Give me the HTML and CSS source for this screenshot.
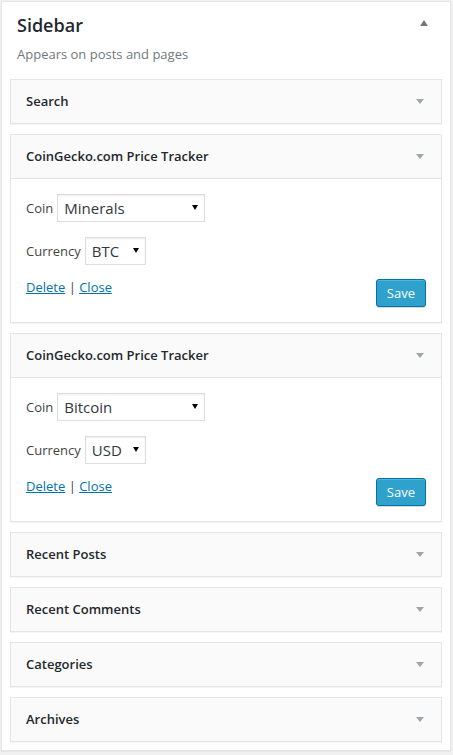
FILE: index.html
```html
<!DOCTYPE html>
<html lang="en">
<head>
<meta charset="utf-8">
<title>Sidebar widgets</title>
<link rel="stylesheet" href="styles.css">
</head>
<body>
<div class="sidebar">
  <div class="sidebar-name">
    <h2>Sidebar</h2>
    <svg class="toggle-up" width="8" height="6" viewBox="0 0 8 6"><path d="M4 0 L8 6 L0 6 Z"/></svg>
  </div>
  <p class="sidebar-desc">Appears on posts and pages</p>
  <div class="widgets">
    <div class="widget">
      <div class="widget-top"><h3>Search</h3><svg class="toggle" width="8" height="5" viewBox="0 0 8 5"><path d="M0 0 L8 0 L4 5 Z"/></svg></div>
    </div>

    <div class="widget">
      <div class="widget-top"><h3>CoinGecko.com Price Tracker</h3><svg class="toggle" width="8" height="5" viewBox="0 0 8 5"><path d="M0 0 L8 0 L4 5 Z"/></svg></div>
      <div class="widget-inside">
        <div class="field"><label>Coin</label><span class="select-wrap coin"><select><option>Minerals</option></select></span></div>
        <div class="field"><label>Currency</label><span class="select-wrap currency"><select><option>BTC</option></select></span></div>
        <div class="actions">
          <div class="links"><a href="#">Delete</a> | <a href="#">Close</a></div>
          <button class="save">Save</button>
        </div>
      </div>
    </div>

    <div class="widget">
      <div class="widget-top"><h3>CoinGecko.com Price Tracker</h3><svg class="toggle" width="8" height="5" viewBox="0 0 8 5"><path d="M0 0 L8 0 L4 5 Z"/></svg></div>
      <div class="widget-inside">
        <div class="field"><label>Coin</label><span class="select-wrap coin"><select><option>Bitcoin</option></select></span></div>
        <div class="field"><label>Currency</label><span class="select-wrap currency"><select><option>USD</option></select></span></div>
        <div class="actions">
          <div class="links"><a href="#">Delete</a> | <a href="#">Close</a></div>
          <button class="save">Save</button>
        </div>
      </div>
    </div>

    <div class="widget">
      <div class="widget-top"><h3>Recent Posts</h3><svg class="toggle" width="8" height="5" viewBox="0 0 8 5"><path d="M0 0 L8 0 L4 5 Z"/></svg></div>
    </div>
    <div class="widget">
      <div class="widget-top"><h3>Recent Comments</h3><svg class="toggle" width="8" height="5" viewBox="0 0 8 5"><path d="M0 0 L8 0 L4 5 Z"/></svg></div>
    </div>
    <div class="widget">
      <div class="widget-top"><h3>Categories</h3><svg class="toggle" width="8" height="5" viewBox="0 0 8 5"><path d="M0 0 L8 0 L4 5 Z"/></svg></div>
    </div>
    <div class="widget">
      <div class="widget-top"><h3>Archives</h3><svg class="toggle" width="8" height="5" viewBox="0 0 8 5"><path d="M0 0 L8 0 L4 5 Z"/></svg></div>
    </div>
  </div>
</div>
</body>
</html>
```
FILE: styles.css
```css
* { box-sizing: border-box; }
html, body { margin: 0; padding: 0; }
body {
  background: #f1f1f1;
  font-family: "Open Sans", "Noto Sans", sans-serif;
  font-size: 13px;
  color: #444;
  padding: 1px 2px 4px 1px;
}
.sidebar {
  background: #fff;
  border: 1px solid #e5e5e5;
  box-shadow: 0 1px 1px rgba(0,0,0,.04);
  width: 450px;
}
.sidebar-name {
  display: flex;
  align-items: center;
  justify-content: space-between;
  padding: 11px 22px 0 15px;
}
.sidebar-name h2 {
  margin: 0;
  font-size: 18px;
  line-height: 24px;
  font-weight: 600;
  color: #23282d;
}
.toggle-up { fill: #72777c; margin-top: -4px; }
.sidebar-desc {
  margin: 8px 0 0;
  padding: 0 15px;
  font-size: 13px;
  line-height: 18px;
  color: #72777c;
}
.widgets {
  display: flex;
  flex-direction: column;
  gap: 10px;
  padding: 16px 8px 8px;
}
.widget {
  border: 1px solid #e5e5e5;
  background: #fff;
  box-shadow: 0 1px 1px rgba(0,0,0,.04);
}
.widget-top {
  display: flex;
  align-items: center;
  background: #fafafa;
  padding-right: 17px;
}
.widget-top h3 {
  flex: 1;
  margin: 0;
  padding: 15px;
  font-size: 13px;
  line-height: 13px;
  font-weight: 600;
  color: #23282d;
}
.toggle { fill: #a0a5aa; }
.widget-inside {
  border-top: 1px solid #e5e5e5;
  padding: 15px 15px 15px;
  display: flex;
  flex-direction: column;
}
.field {
  display: flex;
  align-items: center;
  gap: 4px;
  height: 28px;
  margin-bottom: 15px;
  color: #444;
}
.field + .field { margin-bottom: 14px; }
.select-wrap {
  position: relative;
  display: inline-block;
  height: 28px;
}
.select-wrap::after {
  content: "";
  position: absolute;
  right: 7px;
  top: 11px;
  border-left: 3px solid transparent;
  border-right: 3px solid transparent;
  border-top: 5px solid #000;
  pointer-events: none;
}
.select-wrap select {
  -webkit-appearance: none;
  appearance: none;
  height: 28px;
  margin: 0;
  padding: 0 20px 0 6px;
  border: 1px solid #ddd;
  border-radius: 0;
  background: #fff;
  box-shadow: inset 0 1px 2px rgba(0,0,0,.07);
  font-family: "Open Sans", "Noto Sans", sans-serif;
  font-size: 15px;
  color: #32373c;
}
.coin select { width: 148px; }
.currency select { width: 61px; }
.actions {
  display: flex;
  justify-content: space-between;
  align-items: flex-start;
  height: 28px;
}
.links {
  line-height: 16px;
  color: #444;
}
.links a { color: #0073aa; text-decoration: underline; }
.save {
  height: 28px;
  padding: 0 10px 2px;
  background: #2ea2cc;
  border: 1px solid #0074a2;
  border-radius: 3px;
  box-shadow: inset 0 1px 0 rgba(120,200,230,.5), 0 1px 0 rgba(0,0,0,.15);
  color: #fff;
  font-family: "Open Sans", "Noto Sans", sans-serif;
  font-size: 13px;
  line-height: 26px;
}
```
